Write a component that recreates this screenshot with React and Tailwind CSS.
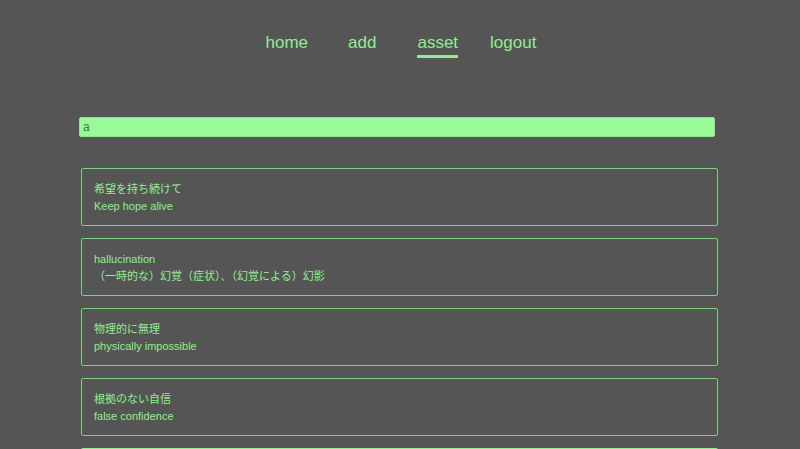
const items = [
  { jp: '希望を持ち続けて', en: 'Keep hope alive' },
  { jp: 'hallucination', en: '（一時的な）幻覚（症状）、（幻覚による）幻影' },
  { jp: '物理的に無理', en: 'physically impossible' },
  { jp: '根拠のない自信', en: 'false confidence' },
]

const links = ['home', 'add', 'asset', 'logout']

const App = () => {
  return (
    <div
      className="min-h-screen bg-[#555555] text-[#90ee90]"
      style={{ fontFamily: '"Liberation Sans", "Noto Sans CJK JP", sans-serif' }}
    >
      <nav className="flex justify-center pt-[32px]">
        {links.map(l => (
          <div key={l} className="w-[75.5px] flex justify-center">
            <a
              className={
                'text-[17px] leading-[22px] pb-[1px] ' +
                (l === 'asset' ? 'border-b-[3px] border-[#90ee90]' : 'border-b-[3px] border-transparent')
              }
            >
              {l}
            </a>
          </div>
        ))}
      </nav>

      <div className="w-[640px] mx-auto mt-[59px] flex flex-col">
        <input
          autoFocus
          defaultValue="a"
          className="w-[636px] -ml-[1px] h-[20px] px-[3px] bg-[#98fb98] border border-[#8de88d] rounded-[2px] text-[12px] text-[#4f6e4f] outline-none"
        />

        <div className="mt-[31px] flex flex-col gap-[12px]">
          {items.map((it, i) => (
            <div
              key={i}
              className="ml-[1px] w-[637px] h-[58px] rounded-[2px] px-[12px] py-[12px] text-[11px] leading-[17px] border border-[#7fcf7f]"
            >
              <div>{it.jp}</div>
              <div>{it.en}</div>
            </div>
          ))}
          <div className="ml-[1px] w-[637px] h-[58px] rounded-[2px] border-2 border-[#90ee90]" />
        </div>
      </div>
    </div>
  )
}

export default App
